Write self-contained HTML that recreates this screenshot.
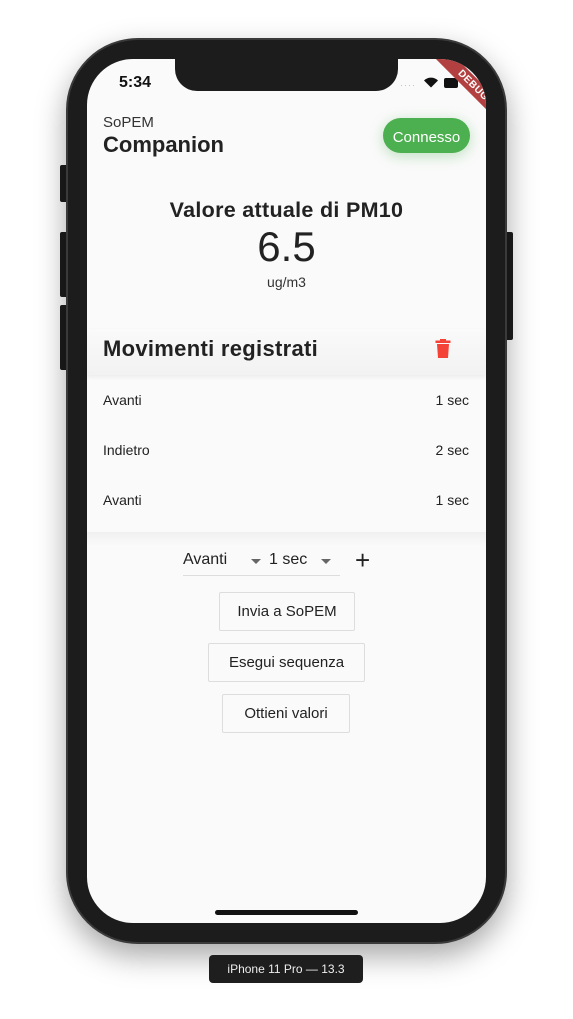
<!DOCTYPE html>
<html><head><style>
*{margin:0;padding:0;box-sizing:border-box}
body{width:573px;height:1019px;background:#fff;position:relative;overflow:hidden;font-family:"Liberation Sans",sans-serif;color:#222}
.abs{position:absolute}
.phone{left:66px;top:38px;width:441px;height:906px;background:#1c1c1c;border-radius:72px;box-shadow:0 12px 30px rgba(0,0,0,.35);border:2px solid #3a3a3a}
.btn{background:#1c1c1c;border-radius:2px}
.screen{left:87px;top:59px;width:399px;height:864px;background:#fafafa;border-radius:46px;overflow:hidden}
.notch{left:88px;top:-2px;width:223px;height:34px;background:#1c1c1c;border-radius:0 0 22px 22px}
.t{position:absolute;white-space:nowrap}
.ob{position:absolute;border:1px solid #ddd;border-radius:2px;background:#fafafa;font-size:15px;text-align:center;line-height:37px;color:#222}
</style></head><body>
<div class="abs btn" style="left:60px;top:165px;width:8px;height:37px"></div>
<div class="abs btn" style="left:60px;top:232px;width:8px;height:65px"></div>
<div class="abs btn" style="left:60px;top:305px;width:8px;height:65px"></div>
<div class="abs btn" style="left:505px;top:232px;width:8px;height:108px"></div>
<div class="abs phone"></div>
<div class="abs screen">
  <div class="abs notch"></div>
  <div class="t" style="left:32px;top:15px;font-size:16px;font-weight:bold;color:#111">5:34</div>
  <div class="t" style="left:313px;top:21px;font-size:9px;color:#bbb;letter-spacing:1px">····</div>
  <svg class="abs" style="left:336px;top:17px" width="16" height="12" viewBox="0 0 16 12"><path d="M8 11.5L1 4.5a10 10 0 0114 0z" fill="#111"/></svg>
  <div class="abs" style="left:357px;top:19px;width:14px;height:10px;background:#111;border-radius:2px"></div>
  <div class="abs" style="left:326px;top:19px;width:120px;height:15px;background:#b34040;transform:rotate(45deg);color:#fff;font-size:10px;font-weight:bold;text-align:center;line-height:15px;letter-spacing:0.5px">DEBUG</div>
  <div class="t" style="left:16px;top:55px;font-size:15px;color:#333">SoPEM</div>
  <div class="t" style="left:16px;top:73px;font-size:22px;font-weight:bold;color:#222">Companion</div>
  <div class="abs" style="left:296px;top:59px;width:87px;height:35px;padding-top:3px;background:#4caf50;border-radius:18px;color:#fff;font-size:15px;display:flex;align-items:center;justify-content:center;box-shadow:0 3px 14px rgba(76,175,80,.35)">Connesso</div>
  <div class="t" style="left:0;width:399px;text-align:center;top:139px;font-size:21.5px;font-weight:bold;color:#222;letter-spacing:0.3px">Valore attuale di PM10</div>
  <div class="t" style="left:0;width:399px;text-align:center;top:164px;font-size:42px;color:#222">6.5</div>
  <div class="t" style="left:0;width:399px;text-align:center;top:215px;font-size:14px;color:#333">ug/m3</div>
  <div class="abs" style="left:0;top:270px;width:399px;height:46px;background:linear-gradient(#fafafa,#f2f2f2);box-shadow:0 2px 4px rgba(0,0,0,.06)"></div>
  <div class="t" style="left:16px;top:277px;font-size:22px;font-weight:bold;color:#222;letter-spacing:0.3px">Movimenti registrati</div>
  <svg class="abs" style="left:347px;top:279px" width="20" height="22" viewBox="0 0 20 22"><rect x="1.5" y="2.5" width="15" height="2.5" fill="#f44336"/><rect x="6" y="1" width="6" height="2" fill="#f44336"/><path d="M3 6h12l-1 14H4z" fill="#f44336"/></svg>
  <div class="t" style="left:16px;top:333px;font-size:14px">Avanti</div><div class="t" style="right:17px;top:333px;font-size:14px">1 sec</div>
  <div class="t" style="left:16px;top:383px;font-size:14px">Indietro</div><div class="t" style="right:17px;top:383px;font-size:14px">2 sec</div>
  <div class="t" style="left:16px;top:433px;font-size:14px">Avanti</div><div class="t" style="right:17px;top:433px;font-size:14px">1 sec</div>
  <div class="abs" style="left:0;top:473px;width:399px;height:14px;background:linear-gradient(#f0f0f0,#fafafa)"></div>
  <div class="t" style="left:96px;top:492px;font-size:16px">Avanti</div>
  <div class="abs" style="left:164px;top:500px;border:5px solid transparent;border-top-color:#666"></div>
  <div class="t" style="left:182px;top:492px;font-size:16px">1 sec</div>
  <div class="abs" style="left:234px;top:500px;border:5px solid transparent;border-top-color:#666"></div>
  <div class="abs" style="left:96px;top:516px;width:157px;height:1px;background:#ddd"></div>
  <div class="t" style="left:268px;top:486px;font-size:26px;color:#222">+</div>
  <div class="ob" style="left:132px;top:533px;width:136px;height:39px">Invia a SoPEM</div>
  <div class="ob" style="left:121px;top:584px;width:157px;height:39px">Esegui sequenza</div>
  <div class="ob" style="left:135px;top:635px;width:128px;height:39px">Ottieni valori</div>
  <div class="abs" style="left:128px;top:851px;width:143px;height:5px;background:#111;border-radius:3px"></div>
</div>
<div class="abs" style="left:209px;top:955px;width:154px;height:28px;background:#1e1e1e;border-radius:4px;color:#eee;font-size:12px;text-align:center;line-height:28px">iPhone 11 Pro — 13.3</div>
</body></html>
